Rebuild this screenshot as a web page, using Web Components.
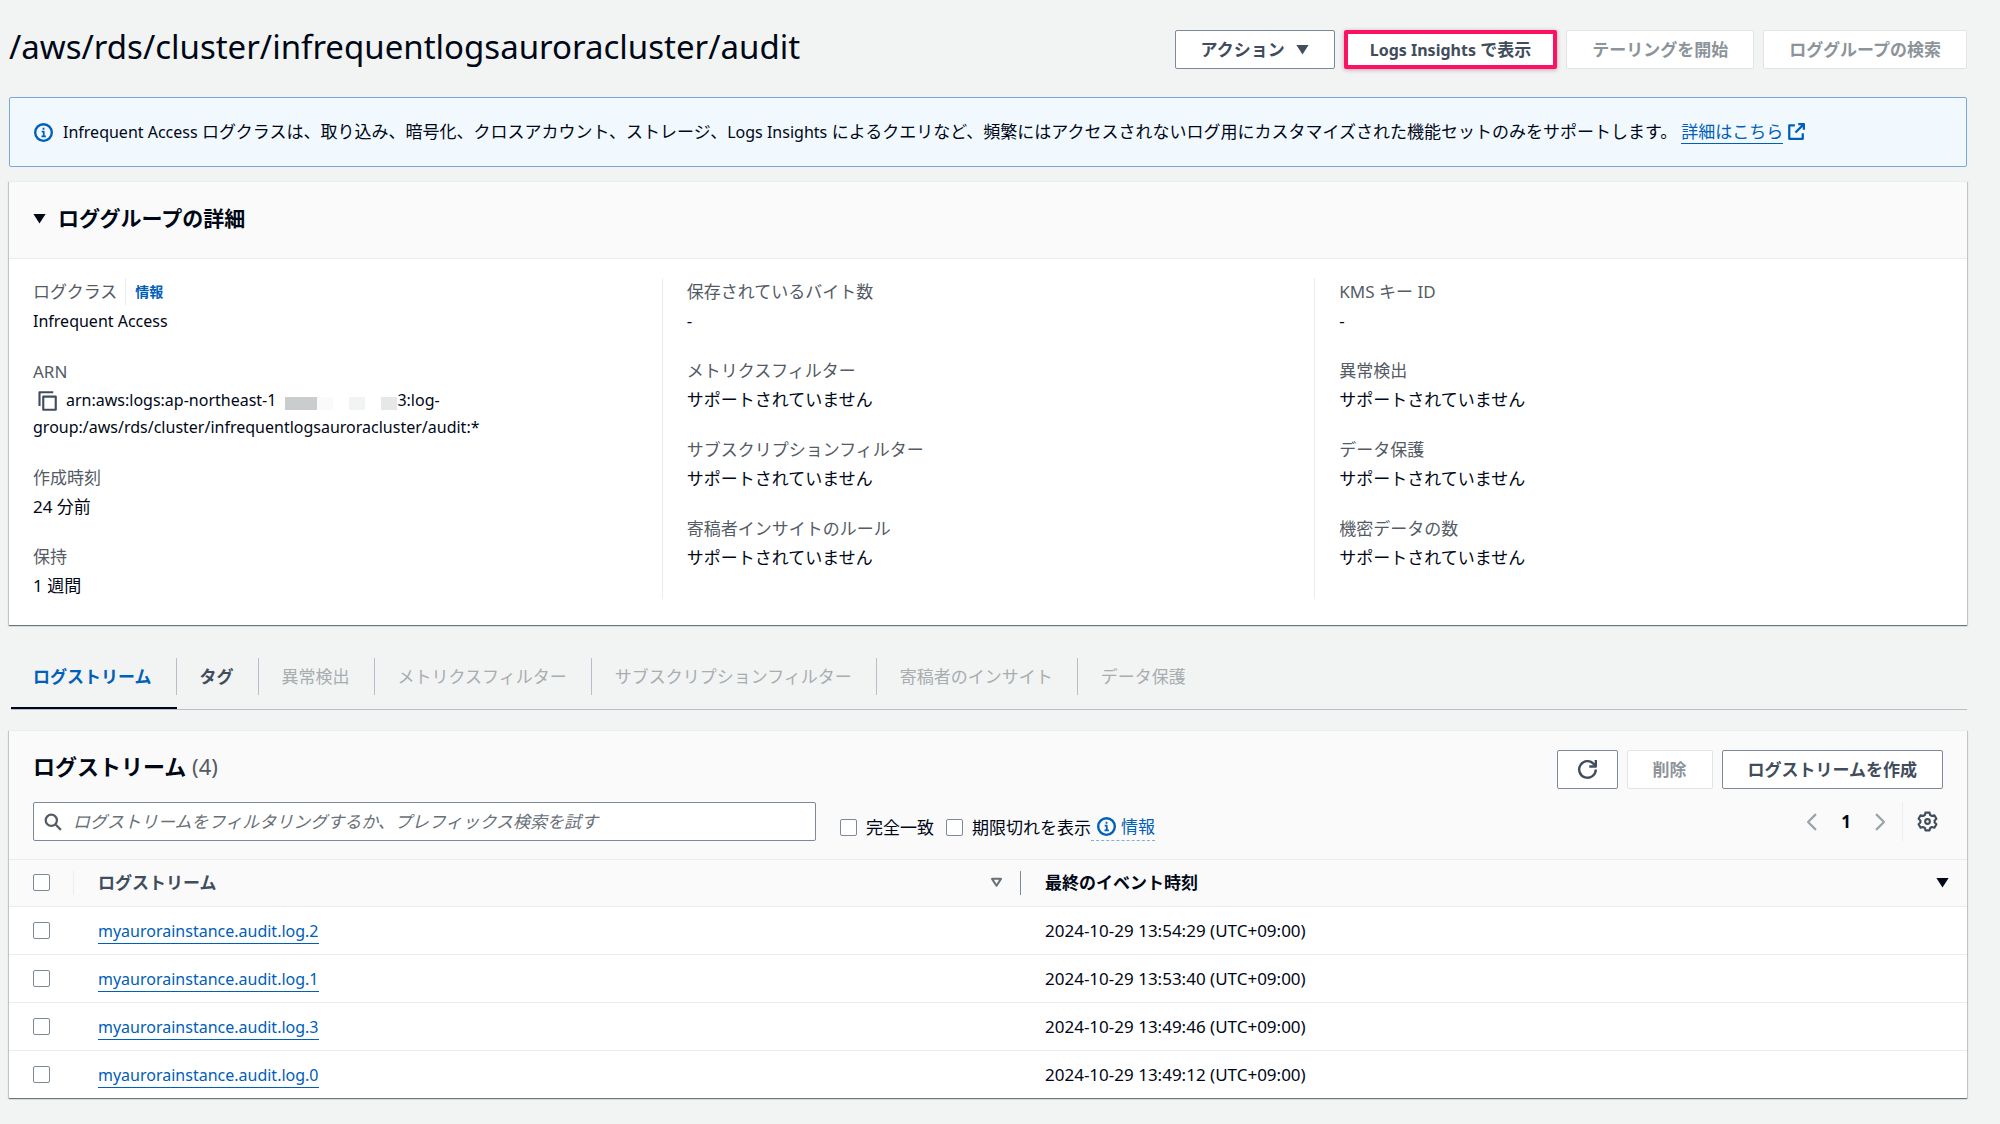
<!DOCTYPE html>
<html lang="ja">
<head>
<meta charset="utf-8">
<title>CloudWatch ロググループ</title>
<style>
  html { background: #f2f3f3; }
  body {
    margin: 0;
    background: #f2f3f3;
    color: #000716;
    font: 17px/27px "Noto Sans", "Noto Sans CJK JP", sans-serif;
  }
</style>
</head>
<body>
<log-group-page></log-group-page>

<script>
const define = (name, css, html, setup) => {
  const template = document.createElement('template');
  template.innerHTML = `<style>*{box-sizing:border-box}[lang=en]{font-size:16px}${css}</style>${html}`;
  customElements.define(name, class extends HTMLElement {
    constructor() {
      super();
      this.attachShadow({ mode: 'open' }).append(template.content.cloneNode(true));
    }
    connectedCallback() {
      if (setup) setup(this, this.shadowRoot);
    }
  });
};

const ICONS = {
  info: '<circle cx="8" cy="8" r="7"/><path d="M6.500 7.300H8.200v4M6.300 11.300h3.700M8 4v1.700" stroke-width="1.500"/>',
  external: '<path d="M7 2H2v12h12V9"/><path d="M10 1h5v5M15 1L7.5 8.5"/>',
  copy: '<path d="M2 12V1h11" stroke-width="1.700"/><rect x="5" y="4.5" width="10" height="10.5" stroke-width="1.700"/>',
  search: '<circle cx="6.5" cy="6.5" r="5"/><path d="M10.5 10.5L15 15"/>',
  refresh: '<path d="M15 8a7 7 0 1 1-1.600-4.500L15 5"/><path d="M15 0v5.500H9.500"/>',
  left: '<path d="M11.500 1L4.500 8l7 7"/>',
  right: '<path d="M4.500 1l7 7-7 7"/>',
  gear: '<path d="M6.300 1h3.400l.5 2 1.600.9 2-.6 1.700 2.900-1.500 1.400v1.800l1.500 1.400-1.700 2.900-2-.6-1.600.9-.5 2H6.300l-.5-2-1.600-.9-2 .6L.500 10.800 2 9.400V7.600L.500 6.200l1.700-2.900 2 .6L5.800 3z" transform="translate(0 -.5)" stroke-width="1.800"/><circle cx="8" cy="8" r="2" stroke-width="1.700"/>',
  down: '<path d="M.500 2.500h15L8 14z" fill="currentColor" stroke="none"/>',
  downline: '<path d="M2.500 3.500h11L8 12z" stroke-width="2.500"/>'
};

define('ui-icon', `
  :host { display: inline-flex; flex: none; width: var(--size, 19px); height: var(--size, 19px); }
  svg { width: 100%; height: 100%; overflow: visible; fill: none; stroke: currentColor; stroke-width: 2; stroke-linejoin: round; }
`, `<svg viewBox="0 0 16 16" aria-hidden="true"></svg>`, (host, root) => {
  root.querySelector('svg').innerHTML = ICONS[host.getAttribute('name')];
});

define('ui-button', `
  :host { display: inline-flex; }
  button {
    display: flex; align-items: center; justify-content: center; gap: 11px;
    height: 39px; padding: 0 25px; border: 1px solid #7d8998; border-radius: 2px;
    background: #fff; color: #414d5c; font: inherit; font-weight: 700; white-space: nowrap; cursor: pointer;
    --size: 13px;
  }
  button:disabled { border-color: #e3e5e5; color: #8d9499; cursor: default; }
  :host([marked]) button { border: 4px solid #fb1262; padding: 0 22px; box-shadow: 0 1px 4px rgba(120, 20, 60, .35); }
`, `<button type="button"><span><slot></slot></span><slot name="icon"></slot></button>`, (host, root) => {
  root.querySelector('button').disabled = host.hasAttribute('disabled');
});

define('icon-button', `
  :host { display: inline-flex; }
  button {
    display: flex; align-items: center; justify-content: center; height: 39px; padding: 0 20px;
    border: 1px solid #7d8998; border-radius: 2px; background: #fff; color: #414d5c; cursor: pointer;
  }
`, `<button type="button"><slot></slot></button>`, (host, root) => {
  root.querySelector('button').setAttribute('aria-label', host.getAttribute('label'));
});

define('ui-link', `
  :host { display: inline-flex; align-items: center; gap: 4px; color: #0060b8; --size: 18px; }
  a { color: inherit; text-decoration: none; line-height: 23px; border-bottom: 1px solid currentColor; }
`, `<a href="#"><slot></slot></a><slot name="icon"></slot>`);

define('ui-info', `
  :host { display: inline-flex; }
  a { display: flex; align-items: center; gap: 5px; color: #0060b8; text-decoration: none; }
  :host([bold]) a { font-size: 14px; font-weight: 700; }
  :host([dotted]) a { padding: 0 0 0 6px; border-bottom: 1px dashed #7fb0dc; line-height: 27px; }
`, `<a href="#"><slot></slot></a>`);

define('ui-checkbox', `
  :host { display: inline-flex; }
  label { display: flex; align-items: center; gap: 9px; white-space: nowrap; }
  input {
    appearance: none; flex: none; width: 17px; height: 17px; margin: 0;
    border: 1px solid #7d8998; border-radius: 2px; background: #fff;
  }
  input:checked { background: #0060b8; }
`, `<label><input type="checkbox"><slot></slot></label>`, (host, root) => {
  if (host.hasAttribute('label')) root.querySelector('input').setAttribute('aria-label', host.getAttribute('label'));
});

define('page-header', `
  :host { display: flex; align-items: flex-start; justify-content: space-between; }
  h1 { margin: 0; font-size: 33px; line-height: 34px; font-weight: 400; }
  .actions { display: flex; gap: 9px; }
`, `<h1><slot></slot></h1><div class="actions"><slot name="actions"></slot></div>`);

define('flash-bar', `
  :host {
    display: flex; align-items: center; gap: 10px; padding: 20px 24px;
    border: 1px solid #7aa7d6; border-radius: 2px; background: #f1f9fe;
  }
  ui-icon { color: #0060b8; }
  p { display: flex; gap: 4px; margin: 0; }
`, `<ui-icon name="info"></ui-icon><p><slot></slot></p>`);

define('ui-panel', `
  :host {
    display: block; background: #fff; border-top: 1px solid #eaeded;
    box-shadow: 0 1px 1px 0 rgba(0, 28, 36, .4), 1px 1px 1px 0 rgba(0, 28, 36, .15), -1px 1px 1px 0 rgba(0, 28, 36, .15);
  }
  header { background: #fafafa; border-bottom: 1px solid #eaeded; }
`, `<header><slot name="header"></slot></header><slot></slot>`);

define('panel-toggle', `
  :host { display: block; padding: 20px 24px 24px; }
  h2 { margin: 0; font-size: 21px; line-height: 32px; font-weight: 700; }
  button { display: flex; align-items: center; gap: 12px; padding: 0; border: 0; background: none; color: inherit; font: inherit; --size: 13px; }
`, `<h2><button type="button" aria-expanded="true"><ui-icon name="down"></ui-icon><slot></slot></button></h2>`);

define('detail-columns', `
  :host { display: grid; grid-template-columns: repeat(3, 1fr); padding: 19px 0 26px; }
`, `<slot></slot>`);

define('detail-column', `
  :host { display: flex; flex-direction: column; gap: 23px; padding: 0 24px; border-left: 1px solid #eaeded; }
  :host(:first-child) { border-left-color: transparent; padding-left: 23px; }
`, `<slot></slot>`);

define('detail-item', `
  :host { display: block; }
  dl, dd { margin: 0; }
  dt { display: flex; align-items: center; color: #545b64; line-height: 27px; }
  dd { margin-top: 2px; line-height: 27px; }
`, `<dl><dt><slot name="term"></slot></dt><dd><slot></slot></dd></dl>`);

define('term-info', `
  :host { display: inline-flex; margin-left: 8px; padding-left: 9px; border-left: 1px solid #eaeded; }
`, `<ui-info bold><slot></slot></ui-info>`);

define('arn-value', `
  :host { display: block; font-size: 16px; }
  .line { display: flex; align-items: center; }
  button { display: flex; margin: 0 9px 0 4px; padding: 0; border: 0; background: none; color: #414d5c; --size: 20px; }
  .mask { display: flex; align-self: flex-end; height: 13px; margin: 0 0 4px 9px; }
  .mask i { width: 16px; }
  .mask i.a { width: 32px; background: #c9cdce; }
  .mask i.b { background: #fafafa; }
  .mask i.c { margin-left: 16px; background: #f2f3f3; }
  .mask i.d { margin-left: 16px; background: #e6e8e8; }
`, `<div class="line"><button type="button" aria-label="ARN をコピー"><ui-icon name="copy"></ui-icon></button><slot name="start"></slot><span class="mask"><i class="a"></i><i class="b"></i><i class="c"></i><i class="d"></i></span><slot name="end"></slot></div><div><slot></slot></div>`);

define('ui-tabs', `
  :host { display: flex; margin-left: 2px; border-bottom: 1px solid #b6bec9; }
`, `<slot></slot>`);

define('ui-tab', `
  :host { display: flex; height: 65px; padding: 14px 0; align-items: flex-start; }
  button {
    height: 37px; padding: 0 24px 0 23px; border: 0; border-right: 1px solid #b6bec9; background: none;
    color: #414d5c; font: inherit; font-weight: 700; white-space: nowrap;
  }
  button:disabled { color: #a7adb1; font-weight: 400; }
  :host([active]) { border-bottom: 2px solid #000716; }
  :host([active]) button { padding-left: 22px; color: #0060b8; }
  :host(:last-child) button { border-right: 0; }
`, `<button type="button" role="tab"><slot></slot></button>`, (host, root) => {
  const b = root.querySelector('button');
  b.disabled = host.hasAttribute('disabled');
  b.setAttribute('aria-selected', String(host.hasAttribute('active')));
});

define('stream-toolbar', `
  :host { display: flex; flex-direction: column; gap: 13px; padding: 19px 24px 18px; }
  .row { display: flex; align-items: center; justify-content: space-between; }
  .row.title { align-items: flex-start; }
  h2 { margin: 0; font-size: 22px; line-height: 32px; font-weight: 700; }
  h2 span { font-weight: 400; color: #545b64; }
  .actions { display: flex; gap: 9px; }
  .search {
    display: flex; align-items: center; gap: 11px; flex: 0 0 783px; height: 39px; padding: 0 10px;
    border: 1px solid #7d8998; border-radius: 2px; background: #fff; color: #545b64; --size: 18px;
  }
  .search input { flex: 1; min-width: 0; border: 0; outline: 0; padding: 0; background: none; font: inherit; color: #000716; }
  .search input::placeholder { color: #687078; font-style: italic; opacity: 1; }
  .options { display: flex; align-items: center; gap: 12px; margin: 11px auto 0 24px; }
  .options div { display: flex; }
  .pager { display: flex; align-items: center; }
  .pager button { display: flex; padding: 0; border: 0; background: none; font: inherit; color: #9ba3a8; --size: 18px; }
  .pager b { padding: 0 20px; }
  .pager .prefs { margin-left: 13px; padding: 10px 6px 10px 15px; border-left: 1px solid #eaeded; color: #414d5c; --size: 19px; }
`, `
  <div class="row title">
    <h2>ログストリーム <span>(4)</span></h2>
    <div class="actions">
      <icon-button label="更新"><ui-icon name="refresh"></ui-icon></icon-button>
      <ui-button disabled>削除</ui-button>
      <ui-button>ログストリームを作成</ui-button>
    </div>
  </div>
  <div class="row">
    <label class="search"><ui-icon name="search"></ui-icon><input type="text" aria-label="ログストリームをフィルタリング" placeholder="ログストリームをフィルタリングするか、プレフィックス検索を試す"></label>
    <div class="options">
      <ui-checkbox>完全一致</ui-checkbox>
      <div><ui-checkbox>期限切れを表示</ui-checkbox><ui-info dotted><ui-icon name="info"></ui-icon>情報</ui-info></div>
    </div>
    <div class="pager">
      <button type="button" aria-label="前のページ"><ui-icon name="left"></ui-icon></button>
      <b>1</b>
      <button type="button" aria-label="次のページ"><ui-icon name="right"></ui-icon></button>
      <button type="button" class="prefs" aria-label="設定"><ui-icon name="gear"></ui-icon></button>
    </div>
  </div>`);

define('stream-table', `
  :host { display: block; }
  table { width: 100%; border-collapse: collapse; table-layout: fixed; }
  th, td { padding: 0 24px; text-align: left; vertical-align: middle; }
  th { height: 46px; background: #fafafa; font-weight: 700; }
  td { height: 48px; border-top: 1px solid #eaeded; }
  tr > :first-child { width: 65px; padding: 0 0 0 24px; }
  ui-checkbox { display: flex; }
  .head { display: flex; align-items: center; justify-content: space-between; --size: 13px; }
  th:nth-child(2) { width: 947px; padding-right: 0; color: #414d5c; }
  th:nth-child(2) .head { padding-right: 17px; border-right: 1px solid #7d8998; line-height: 24px; }
  th:nth-child(2) ui-icon { color: #687078; }
  th:first-child div { height: 24px; display: flex; align-items: center; border-right: 1px solid #eaeded; }
  th:nth-child(3) { padding-right: 18px; }
`, `
  <table>
    <thead><tr>
      <th><div><ui-checkbox label="すべて選択"></ui-checkbox></div></th>
      <th><div class="head">ログストリーム<ui-icon name="downline"></ui-icon></div></th>
      <th><div class="head">最終のイベント時刻<ui-icon name="down"></ui-icon></div></th>
    </tr></thead>
    <tbody></tbody>
  </table>`, (host, root) => {
  const rows = [
    ['myaurorainstance.audit.log.2', '2024-10-29 13:54:29 (UTC+09:00)'],
    ['myaurorainstance.audit.log.1', '2024-10-29 13:53:40 (UTC+09:00)'],
    ['myaurorainstance.audit.log.3', '2024-10-29 13:49:46 (UTC+09:00)'],
    ['myaurorainstance.audit.log.0', '2024-10-29 13:49:12 (UTC+09:00)']
  ];
  root.querySelector('tbody').innerHTML = rows.map(([name, time]) =>
    `<tr><td><ui-checkbox label="${name}"></ui-checkbox></td><td><ui-link lang="en">${name}</ui-link></td><td>${time}</td></tr>`).join('');
});

define('log-group-page', `
  :host { display: block; padding: 30px 33px 26px 9px; }
  flash-bar { margin-top: 28px; }
  .details { margin-top: 14px; }
  ui-tabs { margin-top: 19px; }
  .streams { margin-top: 20px; }
`, `
  <page-header>/aws/rds/cluster/infrequentlogsauroracluster/audit
    <ui-button slot="actions">アクション<ui-icon slot="icon" name="down"></ui-icon></ui-button>
    <ui-button slot="actions" marked><span lang="en">Logs Insights</span> で表示</ui-button>
    <ui-button slot="actions" disabled>テーリングを開始</ui-button>
    <ui-button slot="actions" disabled>ロググループの検索</ui-button>
  </page-header>
  <flash-bar><span><span lang="en">Infrequent Access</span> ログクラスは、取り込み、暗号化、クロスアカウント、ストレージ、<span lang="en">Logs Insights</span> によるクエリなど、頻繁にはアクセスされないログ用にカスタマイズされた機能セットのみをサポートします。</span><ui-link>詳細はこちら<ui-icon slot="icon" name="external"></ui-icon></ui-link></flash-bar>
  <ui-panel class="details">
    <panel-toggle slot="header">ロググループの詳細</panel-toggle>
    <detail-columns>
      <detail-column>
        <detail-item><span slot="term">ログクラス</span><term-info slot="term">情報</term-info><span lang="en">Infrequent Access</span></detail-item>
        <detail-item><span slot="term">ARN</span><arn-value><span slot="start">arn:aws:logs:ap-northeast-1</span><span slot="end">3:log-</span>group:/aws/rds/cluster/infrequentlogsauroracluster/audit:*</arn-value></detail-item>
        <detail-item><span slot="term">作成時刻</span>24 分前</detail-item>
        <detail-item><span slot="term">保持</span>1 週間</detail-item>
      </detail-column>
      <detail-column>
        <detail-item><span slot="term">保存されているバイト数</span>-</detail-item>
        <detail-item><span slot="term">メトリクスフィルター</span>サポートされていません</detail-item>
        <detail-item><span slot="term">サブスクリプションフィルター</span>サポートされていません</detail-item>
        <detail-item><span slot="term">寄稿者インサイトのルール</span>サポートされていません</detail-item>
      </detail-column>
      <detail-column>
        <detail-item><span slot="term">KMS キー ID</span>-</detail-item>
        <detail-item><span slot="term">異常検出</span>サポートされていません</detail-item>
        <detail-item><span slot="term">データ保護</span>サポートされていません</detail-item>
        <detail-item><span slot="term">機密データの数</span>サポートされていません</detail-item>
      </detail-column>
    </detail-columns>
  </ui-panel>
  <ui-tabs role="tablist">
    <ui-tab active>ログストリーム</ui-tab>
    <ui-tab>タグ</ui-tab>
    <ui-tab disabled>異常検出</ui-tab>
    <ui-tab disabled>メトリクスフィルター</ui-tab>
    <ui-tab disabled>サブスクリプションフィルター</ui-tab>
    <ui-tab disabled>寄稿者のインサイト</ui-tab>
    <ui-tab disabled>データ保護</ui-tab>
  </ui-tabs>
  <ui-panel class="streams">
    <stream-toolbar slot="header"></stream-toolbar>
    <stream-table></stream-table>
  </ui-panel>`);
</script>
</body>
</html>
